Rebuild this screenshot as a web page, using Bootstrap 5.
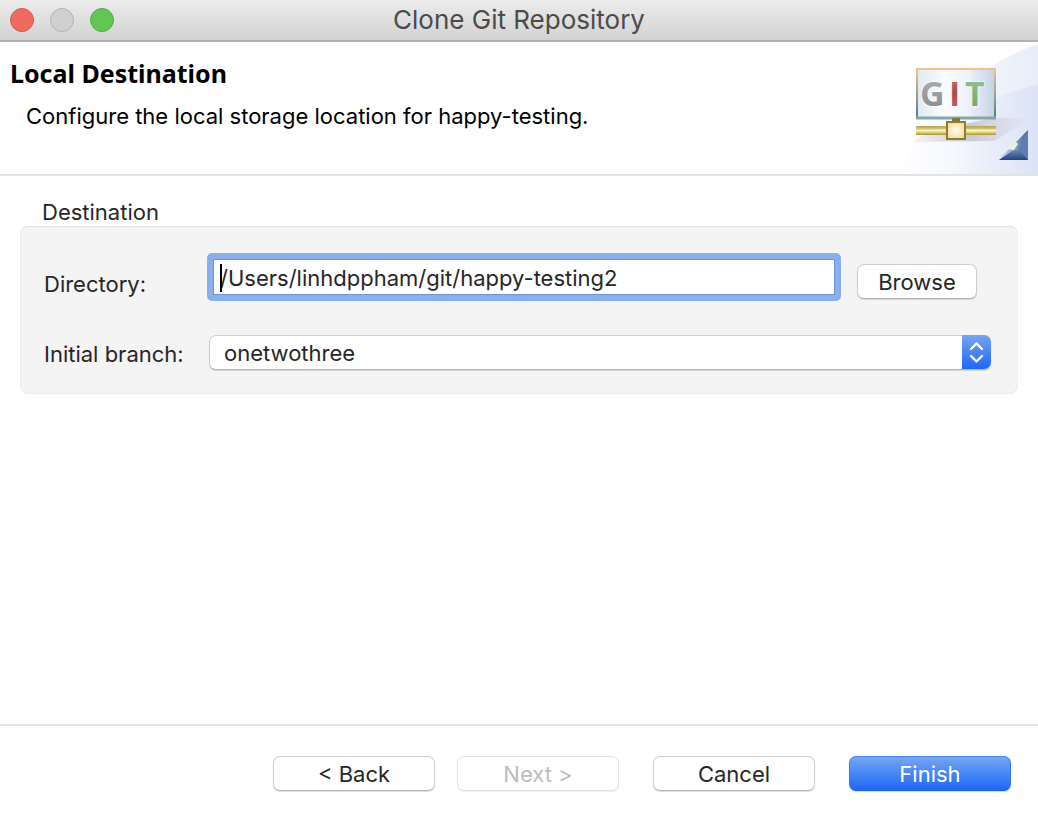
<!DOCTYPE html>
<html lang="en">
<head>
<meta charset="utf-8">
<meta name="viewport" content="width=device-width, initial-scale=1">
<title>Clone Git Repository</title>
<link href="https://cdn.jsdelivr.net/npm/bootstrap@5.3.0/dist/css/bootstrap.min.css" rel="stylesheet">
<style>
body { font-family: Inter, "Liberation Sans", sans-serif; font-size: 22px; line-height: 28px; color: #262626; background: #fff; }
.titlebar { height: 42px; background: linear-gradient(#ececec, #d2d2d2); border-bottom: 2px solid #b1b1b1; color: #4b4b4b; font-size: 26px; }
.lights { left: 10px; top: 8px; gap: 16px; }
.light { width: 24px; height: 24px; border-radius: 50%; padding: 0; border: 1px solid #b3b3b3; background: #d0d0d0; }
.light-close { background: #ee6b60; border-color: #d9574d; }
.light-zoom { background: #62c655; border-color: #4fae43; }
.banner { height: 134px; border-bottom: 2px solid #e3e3e3; color: #000; }
.banner-text { padding: 16px 0 0 10px; }
.banner h1 { font: 700 25px/30px "Noto Sans", sans-serif; margin: 0 0 14px; }
.banner p { margin: 0 0 0 16px; }
.content-area { padding: 22px 20px; }
.group-title { font-size: 22px; font-weight: 400; line-height: 28px; margin: 0 0 0 22px; }
.group-box { background: #f4f4f4; border: 1px solid #ebebeb; border-top-color: #e0e0e0; border-radius: 8px; padding: 26px 26px 23px 23px; }
.field-label { width: 163px; flex: none; }
.directory-label { padding-top: 17px; }
.branch-label { width: 165px; padding-top: 5px; }
.path-wrap { margin-right: 16px; padding: 6px; background: #8aaeee; border-radius: 5px; }
.path-input { height: 36px; border: 1px solid #6c94dc; border-radius: 0; padding: 2px 6px 0; font-size: 22px; color: #262626; background: #fff; caret-color: transparent; }
.path-input:focus { border-color: #6c94dc; box-shadow: none; color: #262626; }
.caret { left: 13px; top: 11px; width: 2px; height: 28px; background: #000; }
.push { height: 35px; padding: 0; font-size: 22px; line-height: 32px; color: #262626; background: #fff; border: 1px solid #cecece; border-bottom-color: #b4b4b4; border-radius: 7px; box-shadow: 0 1px 1px rgba(0,0,0,.14); }
.push:disabled { color: #bcbcbc; background: #fff; border-color: #e2e2e2; opacity: 1; box-shadow: 0 1px 1px rgba(0,0,0,.05); }
.push-primary, .push-primary:hover { color: #fff; background: linear-gradient(#75a6f6, #1d68f6); border-color: #4b86ee #3677f2 #1b62ec; }
.browse { width: 120px; margin: 11px 14px 0 0; }
.branch-row { margin-top: 34px; }
.branch-select { height: 35px; padding: 0 40px 0 14px; font-size: 22px; line-height: 32px; color: #262626; background: #fff; border: 1px solid #cecece; border-bottom-color: #b4b4b4; border-radius: 7px; box-shadow: 0 1px 1px rgba(0,0,0,.14); }
.stepper { right: 0; top: 0; width: 29px; height: 34px; background: linear-gradient(#75a6f6, #1d68f6); border-radius: 0 7px 7px 0; pointer-events: none; }
.actions { height: 102px; border-top: 2px solid #e3e3e3; padding: 30px 27px 0; gap: 34px; }
.wizard-nav { gap: 22px; }
.actions .push { width: 162px; }
</style>
</head>
<body class="d-flex flex-column min-vh-100">
<header class="titlebar position-relative d-flex align-items-center justify-content-center">
  <div class="lights position-absolute d-flex">
    <button class="light light-close" type="button" aria-label="Close"></button>
    <button class="light" type="button" aria-label="Minimize" disabled></button>
    <button class="light light-zoom" type="button" aria-label="Zoom"></button>
  </div>
  <span>Clone Git Repository</span>
</header>
<section class="banner d-flex justify-content-between">
  <div class="banner-text">
    <h1>Local Destination</h1>
    <p>Configure the local storage location for happy-testing.</p>
  </div>
  <svg width="140" height="132" viewBox="0 2 140 132" aria-hidden="true" class="flex-shrink-0">
    <defs>
      <linearGradient id="sky" x1="0" y1="0" x2="1" y2="0"><stop offset="0" stop-color="#fff"/><stop offset="1" stop-color="#e8edf9"/></linearGradient>
      <linearGradient id="sweep" x1="0" y1="0" x2="1" y2="0"><stop offset="0" stop-color="#e8edf9" stop-opacity="0"/><stop offset="1" stop-color="#dbe3f5"/></linearGradient>
      <linearGradient id="frame" x1="0" y1="0" x2="0" y2="1"><stop offset="0" stop-color="#edc38b"/><stop offset=".45" stop-color="#a8a68f"/><stop offset="1" stop-color="#527f80"/></linearGradient>
      <linearGradient id="screen" x1="0" y1="0" x2="1" y2="0"><stop offset="0" stop-color="#e0e9f3"/><stop offset=".35" stop-color="#fafcff"/><stop offset=".65" stop-color="#eef2fa"/><stop offset="1" stop-color="#c4d2e7"/></linearGradient>
      <linearGradient id="grey" x1="0" y1="0" x2="0" y2="1"><stop offset="0" stop-color="#b5b5b5"/><stop offset="1" stop-color="#858585"/></linearGradient>
      <linearGradient id="red" x1="0" y1="0" x2="0" y2="1"><stop offset="0" stop-color="#c88585"/><stop offset=".5" stop-color="#b04848"/><stop offset="1" stop-color="#c47070"/></linearGradient>
      <linearGradient id="green" x1="0" y1="0" x2="0" y2="1"><stop offset="0" stop-color="#98c69b"/><stop offset="1" stop-color="#64a46a"/></linearGradient>
      <linearGradient id="gold" x1="0" y1="0" x2="0" y2="1"><stop offset="0" stop-color="#b5a649"/><stop offset=".25" stop-color="#c9bb5e"/><stop offset=".5" stop-color="#fdf6c4"/><stop offset=".75" stop-color="#d8ca70"/><stop offset="1" stop-color="#a8922f"/></linearGradient>
      <radialGradient id="node"><stop offset="0" stop-color="#fffdf0"/><stop offset="1" stop-color="#f7dfa0"/></radialGradient>
      <linearGradient id="shade" x1="0" y1="0" x2="1" y2="0"><stop offset="0" stop-color="#cfcbdb" stop-opacity=".2"/><stop offset=".5" stop-color="#cdc9d9"/><stop offset="1" stop-color="#cfcbdb" stop-opacity="0"/></linearGradient>
      <linearGradient id="tri" x1="0" y1="0" x2="1" y2="0"><stop offset="0" stop-color="#d8e5ee"/><stop offset=".5" stop-color="#8eaace"/><stop offset="1" stop-color="#3f5f9b"/></linearGradient>
      <linearGradient id="base" x1="0" y1="0" x2="0" y2="1"><stop offset="0" stop-color="#6f8cb8"/><stop offset="1" stop-color="#24437f"/></linearGradient>
    </defs>
    <path d="M0 134C24 74 82 24 140 4V134Z" fill="url(#sky)"/>
    <path d="M50 134V88Q96 53 140 45V134Z" fill="url(#sweep)"/>
    <path d="M14 102L30 91 96 78 134 78 96 101Z" fill="url(#shade)"/>
    <rect x="19" y="29" width="78" height="49" fill="url(#screen)" stroke="url(#frame)" stroke-width="2"/>
    <path d="M18 29H98" stroke="#edc38b" stroke-width="2"/>
    <path d="M18 78H98" stroke="#83a7a7" stroke-width="3"/>
    <g font-family="Open Sans, sans-serif" font-weight="700" font-size="34" stroke="#fff" stroke-width="2" paint-order="stroke" stroke-opacity=".6">
      <text x="22" y="66" fill="url(#grey)">G</text>
      <text x="51" y="66" fill="url(#red)">I</text>
      <text x="67" y="66" fill="url(#green)">T</text>
    </g>
    <path d="M54 78H62V82H54Z" fill="#807b38"/>
    <rect x="18" y="86" width="80" height="9" fill="url(#gold)"/>
    <rect x="49" y="82" width="18" height="17" fill="url(#node)" stroke="#8c7d31" stroke-width="2"/>
    <path d="M130 90V120H100Z" fill="url(#tri)"/>
    <path d="M130 90V120L120 109Z" fill="#5f7db1"/>
    <path d="M101 120L114 111 120 109 130 120Z" fill="url(#base)"/>
    <path d="M109 109L117 101 120 104 116 110Z" fill="#edf0d9"/>
  </svg>
</section>
<main class="content-area flex-grow-1">
  <h2 class="group-title">Destination</h2>
  <div class="group-box">
    <div class="d-flex align-items-start">
      <label class="field-label directory-label" for="directory">Directory:</label>
      <div class="path-wrap position-relative flex-grow-1">
        <input class="path-input form-control" id="directory" type="text" value="/Users/linhdppham/git/happy-testing2" spellcheck="false">
        <span class="caret position-absolute"></span>
      </div>
      <button class="push browse btn flex-shrink-0" type="button">Browse</button>
    </div>
    <div class="branch-row d-flex align-items-start">
      <label class="field-label branch-label" for="branch">Initial branch:</label>
      <div class="position-relative flex-grow-1">
        <select class="branch-select form-select" id="branch"><option>onetwothree</option></select>
        <span class="stepper position-absolute"><svg class="d-block" width="29" height="34" viewBox="0 0 29 34" fill="none" stroke="#fff" stroke-width="2.4" stroke-linecap="round" stroke-linejoin="round" aria-hidden="true"><path d="M9 14L14.500 8.500 20 14M9 21L14.500 26.500 20 21"/></svg></span>
      </div>
    </div>
  </div>
</main>
<footer class="actions d-flex justify-content-end align-items-start">
  <div class="wizard-nav d-flex">
    <button class="push btn" type="button">&lt; Back</button>
    <button class="push btn" type="button" disabled>Next &gt;</button>
  </div>
  <button class="push btn" type="button">Cancel</button>
  <button class="push push-primary btn" type="button">Finish</button>
</footer>
<script src="https://cdn.jsdelivr.net/npm/bootstrap@5.3.0/dist/js/bootstrap.bundle.min.js"></script>
</body>
</html>
